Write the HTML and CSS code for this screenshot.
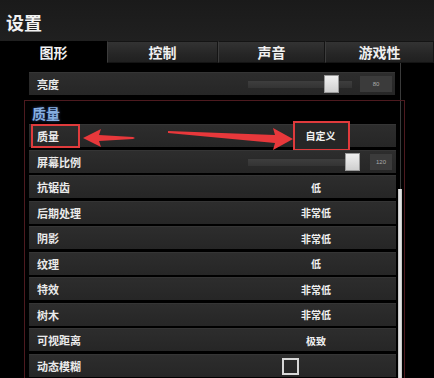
FILE: index.html
```html
<!DOCTYPE html>
<html lang="zh">
<head>
<meta charset="utf-8">
<title>设置</title>
<link rel="stylesheet" href="styles.css">
</head>
<body>
<div class="screen">
  <header class="header">设置</header>
  <nav class="tabs">
    <div class="tab active">图形</div>
    <div class="tab">控制</div>
    <div class="tab">声音</div>
    <div class="tab">游戏性</div>
  </nav>
  <main class="main">
    <div class="row row-top">
      <span class="label">亮度</span>
      <div class="slider s-bright"><span class="thumb t-bright"></span></div>
      <span class="numbox nb-bright">80</span>
    </div>
    <section class="section">
      <div class="sec-inner">
        <div class="rows">
          <h2 class="heading">质量</h2>
          <div class="row"><span class="label"><span class="mark">质量</span></span><span class="value"><span class="valbox">自定义</span></span></div>
          <div class="row">
            <span class="label">屏幕比例</span>
            <div class="slider s-scale"><span class="thumb t-scale"></span></div>
            <span class="numbox nb-scale">120</span>
          </div>
          <div class="row"><span class="label">抗锯齿</span><span class="value">低</span></div>
          <div class="row"><span class="label">后期处理</span><span class="value">非常低</span></div>
          <div class="row"><span class="label">阴影</span><span class="value">非常低</span></div>
          <div class="row"><span class="label">纹理</span><span class="value">低</span></div>
          <div class="row"><span class="label">特效</span><span class="value">非常低</span></div>
          <div class="row"><span class="label">树木</span><span class="value">非常低</span></div>
          <div class="row"><span class="label">可视距离</span><span class="value">极致</span></div>
          <div class="row"><span class="label">动态模糊</span><span class="value"><span class="check"></span></span></div>
        </div>
        <div class="scroll"><span class="scroll-thumb"></span></div>
      </div>
      <svg class="arrows" width="381" height="60" viewBox="0 0 381 60">
        <polygon points="58,37 76,28 74,34 108,36 110,37 108,38 74,40 76,46" fill="#e8383b"/>
        <polygon points="143,30 250,34 248,27 268,38 248,49 250,42 143,32" fill="#e8383b"/>
      </svg>
    </section>
  </main>
</div>
</body>
</html>
```
FILE: styles.css
```css
* { box-sizing: border-box; margin: 0; padding: 0; }
html, body { background: #000; }
body {
  width: 434px;
  height: 378px;
  overflow: hidden;
  font-family: "Noto Sans CJK SC", "Noto Sans", sans-serif;
  color: #ececec;
}
.screen { width: 434px; height: 378px; display: flex; flex-direction: column; }
.header {
  height: 41px;
  background: linear-gradient(#1a1a1a, #202020);
  font-size: 18px;
  font-weight: 700;
  line-height: 44px;
  padding-left: 6px;
  color: #f2f2f2;
}
.tabs { display: flex; height: 27px; background: #000; }
.tab {
  flex: 0 0 auto;
  width: 107px;
  display: flex;
  align-items: center;
  justify-content: center;
  font-size: 14px;
  font-weight: 700;
  color: #f0f0f0;
  background: linear-gradient(#333333, #262626 60%, #202020);
  border: 1px solid #141414;
  border-left: 1px solid #3c3c3c;
}
.tab:nth-child(2) { width: 111px; }
.tab:nth-child(3) { width: 107px; }
.tab:nth-child(4) { flex: 1; }
.tab.active { background: #000; border-color: #000; }

.main {
  flex: 1;
  padding-top: 9px;
  background: linear-gradient(#3a3a3a, #3a3a3a) no-repeat 400px 0 / 1px 100%;
  background-color: #000;
}
.row {
  position: relative;
  height: 23px;
  margin-bottom: 2.5px;
  margin-left: 29px;
  width: 367px;
  display: flex;
  align-items: center;
  background: linear-gradient(#2d2d2d, #262626);
  border-top: 1px solid #353535;
}
.rows .row { margin-left: 0; }
.row-top { width: 366px; margin-bottom: 0; }
.label {
  flex: 0 0 auto;
  font-size: 11px;
  font-weight: 700;
  padding-left: 8px;
  width: 219px;
  color: #eaeaea;
}
.mark {
  display: inline-flex;
  align-items: center;
  height: 24px;
  margin-left: -6px;
  padding: 0 19px 0 4px;
  border: 2px solid #df3b3c;
}
.value {
  flex: 0 0 auto;
  width: 136px;
  text-align: center;
  font-size: 10px;
  font-weight: 700;
  color: #f0f0f0;
}
.valbox {
  display: inline-block;
  margin-left: 10px;
  border: 2px solid #e03a3c;
  padding: 6px 12px 6px 11px;
  line-height: 14px;
  background: #262626;
}
.slider {
  position: relative;
  height: 8px;
  background: linear-gradient(#3e3e3e, #333);
  border-top: 1px solid #2a2a2a;
}
.s-bright { width: 104px; }
.s-scale { width: 112px; }
.thumb {
  position: absolute;
  top: -6px;
  width: 15px;
  height: 18px;
  background: linear-gradient(#f0f0f0, #cfcfcf);
  border: 1px solid #999;
}
.t-bright { left: 76px; }
.t-scale { left: 97px; }
.numbox {
  height: 16px;
  background: #3b3b3b;
  color: #aaa;
  font-family: "Liberation Sans", sans-serif;
  font-size: 6px;
  display: flex;
  align-items: center;
  justify-content: center;
}
.nb-bright { margin-left: 8px; width: 32px; }
.nb-scale { margin-left: 10px; width: 22px; }

.section {
  position: relative;
  margin: 5px 0 0 24px;
  width: 381px;
  flex: 1;
  height: 280px;
  border: 1px solid #4d1a1f;
  border-bottom: none;
}
.sec-inner { display: flex; padding-left: 4px; }
.rows { width: 367px; }
.heading {
  height: 23px;
  font-size: 14px;
  font-weight: 700;
  color: #86aee0;
  text-shadow: 0 0 3px rgba(80, 130, 220, 0.6);
  padding-left: 3px;
  line-height: 24px;
}
.scroll { width: 13px; padding-left: 2px; }
.scroll-thumb {
  display: block;
  margin-top: 88px;
  width: 4px;
  height: 200px;
  background: linear-gradient(90deg, #bbb, #eee, #bbb);
}
.check {
  display: inline-block;
  width: 17px;
  height: 17px;
  border: 2px solid #d8d8d8;
  vertical-align: top;
  margin-top: 2px;
  margin-left: -52px;
}
.arrows { position: absolute; left: 0; top: 0; pointer-events: none; }
```
